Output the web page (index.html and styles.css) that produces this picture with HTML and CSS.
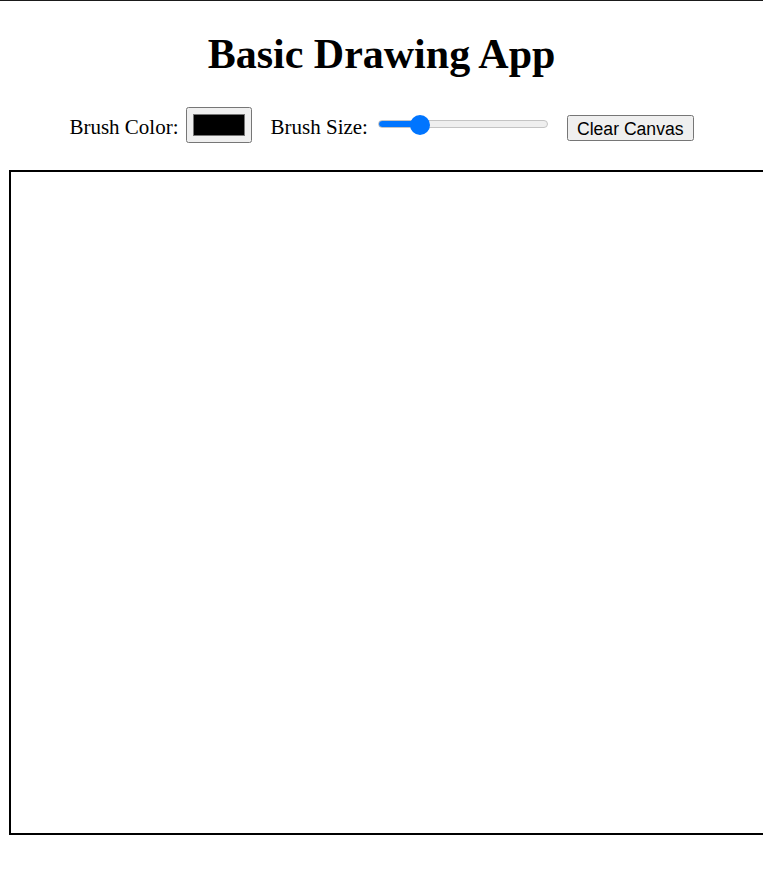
FILE: index.html
```html
<!DOCTYPE html>
<html>
<head>
<meta charset="utf-8">
<link rel="stylesheet" href="styles.css">
</head>
<body>
<div class="topline"></div>
<h1 class="title">Basic Drawing App</h1>
<div class="controls">
  <label class="ctl-label" for="color">Brush Color:</label>
  <input class="color-input" type="color" id="color" value="#000000">
  <label class="ctl-label gap" for="size">Brush Size:</label>
  <input class="range-input" type="range" id="size" min="1" max="20" value="5">
  <button class="clear-btn">Clear Canvas</button>
</div>
<canvas class="board" width="800" height="661"></canvas>
</body>
</html>
```
FILE: styles.css
```css
html, body {
  margin: 0;
  padding: 0;
  background: #fff;
}
body {
  font-family: "Liberation Serif", "Times New Roman", serif;
  color: #000;
  width: 763px;
  overflow: hidden;
}
.topline {
  height: 1px;
  background: #1a1a1a;
}
.title {
  margin: 29px 0 0 0;
  text-align: center;
  font-size: 42px;
  font-weight: bold;
  line-height: 48px;
}
.controls {
  display: flex;
  align-items: center;
  justify-content: center;
  margin-top: 28px;
  height: 38px;
  font-size: 21px;
}
.ctl-label {
  position: relative;
  top: 2px;
}
.ctl-label.gap {
  margin-left: 19px;
}
.color-input {
  width: 66px;
  height: 36px;
  margin: 0 0 0 7px;
  padding: 2px 4px;
}
.range-input {
  -webkit-appearance: none;
  appearance: none;
  width: 170px;
  height: 20px;
  margin: 0 0 0 10px;
  background: transparent;
  position: relative;
  top: -1px;
}
.range-input::-webkit-slider-runnable-track {
  height: 8px;
  border-radius: 5px;
  border: 1px solid #c4c4c4;
  background: linear-gradient(to right, #0075ff 0, #0075ff 25%, #efefef 25%, #efefef 100%);
}
.range-input::-webkit-slider-thumb {
  -webkit-appearance: none;
  appearance: none;
  width: 20px;
  height: 20px;
  border-radius: 50%;
  background: #0075ff;
  border: none;
  margin-top: -6px;
}
.clear-btn {
  margin-left: 19px;
  font-family: "Liberation Sans", Arial, sans-serif;
  font-size: 17.6px;
  padding: 2px 8px;
  height: 26px;
  position: relative;
  top: 3px;
}
.board {
  display: block;
  margin: 26px 0 0 9px;
  border: 2px solid #000;
  width: 800px;
  height: 661px;
}
```
